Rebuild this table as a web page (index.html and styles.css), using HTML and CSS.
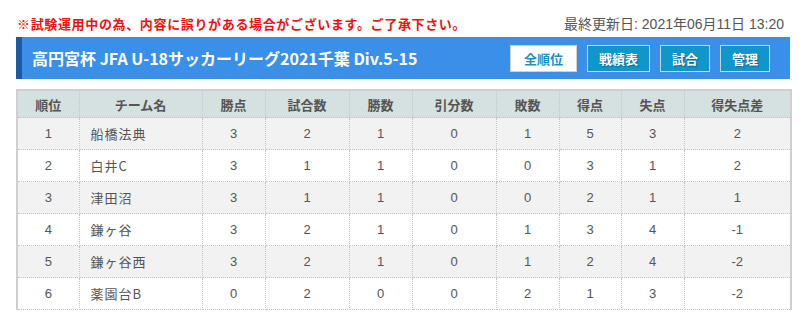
FILE: index.html
```html
<!DOCTYPE html>
<html lang="ja">
<head>
<meta charset="utf-8">
<link rel="stylesheet" href="styles.css">
</head>
<body>
<div class="page">
  <div class="topline">
    <p class="notice">※試験運用中の為、内容に誤りがある場合がございます。ご了承下さい。</p>
    <p class="updated">最終更新日: 2021年06月11日 13:20</p>
  </div>
  <div class="titlebar">
    <h1 class="title">高円宮杯 JFA U-18サッカーリーグ2021千葉 Div.5-15</h1>
    <nav class="navs">
      <a class="btn btn-active">全順位</a>
      <a class="btn">戦績表</a>
      <a class="btn">試合</a>
      <a class="btn">管理</a>
    </nav>
  </div>
  <table class="standings">
    <colgroup>
      <col class="c-rank"><col class="c-team"><col class="c-pts"><col class="c-gp"><col class="c-w"><col class="c-d"><col class="c-l"><col class="c-gf"><col class="c-ga"><col class="c-gd">
    </colgroup>
    <thead>
      <tr><th>順位</th><th>チーム名</th><th>勝点</th><th>試合数</th><th>勝数</th><th>引分数</th><th>敗数</th><th>得点</th><th>失点</th><th>得失点差</th></tr>
    </thead>
    <tbody>
      <tr><td>1</td><td class="team">船橋法典</td><td>3</td><td>2</td><td>1</td><td>0</td><td>1</td><td>5</td><td>3</td><td>2</td></tr>
      <tr><td>2</td><td class="team">白井C</td><td>3</td><td>1</td><td>1</td><td>0</td><td>0</td><td>3</td><td>1</td><td>2</td></tr>
      <tr><td>3</td><td class="team">津田沼</td><td>3</td><td>1</td><td>1</td><td>0</td><td>0</td><td>2</td><td>1</td><td>1</td></tr>
      <tr><td>4</td><td class="team">鎌ヶ谷</td><td>3</td><td>2</td><td>1</td><td>0</td><td>1</td><td>3</td><td>4</td><td>-1</td></tr>
      <tr><td>5</td><td class="team">鎌ヶ谷西</td><td>3</td><td>2</td><td>1</td><td>0</td><td>1</td><td>2</td><td>4</td><td>-2</td></tr>
      <tr><td>6</td><td class="team">薬園台B</td><td>0</td><td>2</td><td>0</td><td>0</td><td>2</td><td>1</td><td>3</td><td>-2</td></tr>
    </tbody>
  </table>
</div>
</body>
</html>
```

FILE: styles.css
```css
html, body {
  margin: 0;
  padding: 0;
  background: #ffffff;
}
body {
  font-family: "Noto Sans CJK JP", "Noto Sans", sans-serif;
  color: #444;
}
.page {
  width: 774px;
  margin-left: 16px;
}
.topline {
  display: flex;
  justify-content: space-between;
  align-items: center;
  height: 37px;
  padding: 0 6px 0 1px;
  box-sizing: border-box;
}
.topline p {
  margin: 0;
  padding-top: 10px;
  line-height: 18px;
  font-size: 13px;
}
.notice {
  color: #ee1111;
  font-weight: bold;
  letter-spacing: 0.65px;
}
.updated {
  color: #555;
  font-family: "Liberation Sans", "Noto Sans CJK JP", sans-serif;
  font-size: 14px !important;
}
.titlebar {
  display: flex;
  align-items: center;
  justify-content: space-between;
  height: 42px;
  background: #3a8fe8;
  border-left: 6px solid #1a5aa6;
  padding: 0 20px 0 10px;
}
.title {
  margin: 0;
  color: #fff;
  font-size: 16px;
  font-weight: bold;
  line-height: 20px;
}
.navs {
  display: flex;
  gap: 10px;
}
.btn {
  display: flex;
  align-items: center;
  justify-content: center;
  height: 27px;
  box-sizing: border-box;
  padding: 0 11px;
  border: 1px solid #b9dcf0;
  background: #0f97cc;
  color: #fff;
  font-size: 13px;
  font-weight: bold;
  text-shadow: 1px 1px 1px rgba(0,0,0,0.35);
}
.btn-active {
  background: #fff;
  color: #1e8fc6;
  border-color: #d0d0d0;
  text-shadow: none;
  padding: 0 13px;
}
.standings {
  margin-top: 10px;
  width: 774px;
  table-layout: fixed;
  border-collapse: collapse;
  border-top: 2px solid #cfcfcf;
  border-left: 2px solid #cfcfcf;
  border-right: 2px solid #cfcfcf;
  font-size: 13px;
}
.c-rank { width: 62px; }
.c-team { width: 123px; }
.c-pts { width: 63px; }
.c-gp { width: 84px; }
.c-w { width: 63px; }
.c-d { width: 84px; }
.c-l { width: 63px; }
.c-gf { width: 62px; }
.c-ga { width: 63px; }
.c-gd { width: 107px; }
.standings th, .standings td {
  border: 1px dotted #c4c4c4;
  text-align: center;
  padding: 0;
}
.standings th {
  height: 26px;
  background: #d5e0e0;
  color: #555;
  font-weight: bold;
}
.standings td {
  height: 31px;
  color: #555;
  font-family: "Liberation Sans", "Noto Sans CJK JP", sans-serif;
}
.standings tbody tr:nth-child(odd) td {
  background: #f2f2f2;
}
.standings td.team {
  text-align: left;
  padding-left: 11px;
  font-family: "Noto Sans CJK JP", sans-serif;
  letter-spacing: 1px;
}
```
